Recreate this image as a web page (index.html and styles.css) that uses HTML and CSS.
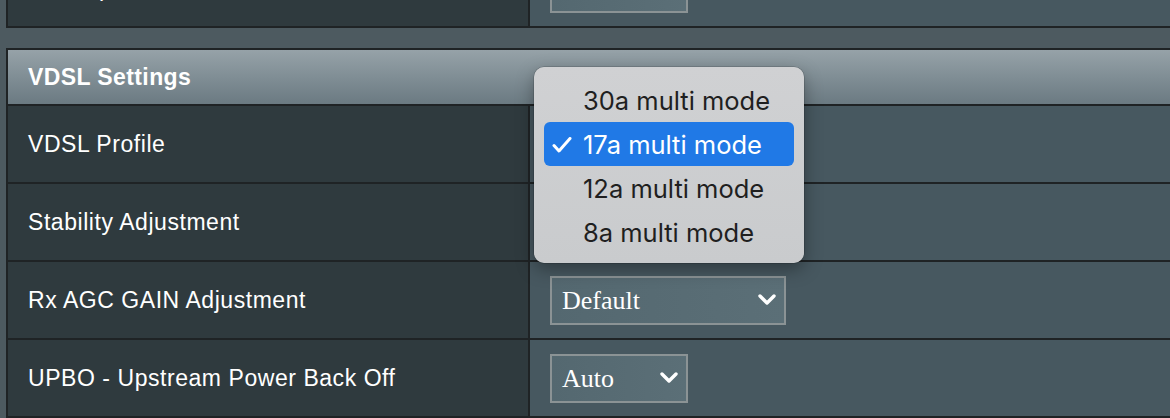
FILE: index.html
```html
<!DOCTYPE html>
<html lang="en">
<head>
<meta charset="utf-8">
<title>VDSL Settings</title>
<link rel="stylesheet" href="styles.css">
</head>
<body>
<div class="page">
  <div class="table table-prev">
    <div class="cell label">Bitswap</div>
    <div class="cell value">
      <div class="select select-sm"><span>Enable</span>
        <svg class="chev" viewBox="0 0 18 12" width="18" height="12"><polyline points="2,2 9,9 16,2"/></svg>
      </div>
    </div>
  </div>

  <div class="table table-main">
    <div class="head">VDSL Settings</div>

    <div class="cell label">VDSL Profile</div>
    <div class="cell value">
      <div class="select select-md"><span>17a multi mode</span>
        <svg class="chev" viewBox="0 0 18 12" width="18" height="12"><polyline points="2,2 9,9 16,2"/></svg>
      </div>
    </div>

    <div class="cell label">Stability Adjustment</div>
    <div class="cell value">
      <div class="select select-md"><span>Disabled</span>
        <svg class="chev" viewBox="0 0 18 12" width="18" height="12"><polyline points="2,2 9,9 16,2"/></svg>
      </div>
    </div>

    <div class="cell label">Rx AGC GAIN Adjustment</div>
    <div class="cell value">
      <div class="select select-md"><span>Default</span>
        <svg class="chev" viewBox="0 0 18 12" width="18" height="12"><polyline points="2,2 9,9 16,2"/></svg>
      </div>
    </div>

    <div class="cell label">UPBO - Upstream Power Back Off</div>
    <div class="cell value">
      <div class="select select-sm"><span>Auto</span>
        <svg class="chev" viewBox="0 0 18 12" width="18" height="12"><polyline points="2,2 9,9 16,2"/></svg>
      </div>
    </div>
  </div>

  <div class="menu">
    <div class="item">30a multi mode</div>
    <div class="item selected">
      <svg class="check" viewBox="0 0 20 16" width="20" height="16"><polyline points="2,8.5 7,14 18,1.5"/></svg>
      17a multi mode
    </div>
    <div class="item">12a multi mode</div>
    <div class="item">8a multi mode</div>
  </div>
</div>
</body>
</html>
```

FILE: styles.css
```css
html, body {
  margin: 0;
  padding: 0;
  background: #4d5a60;
  overflow: hidden;
}

.page {
  position: relative;
  width: 1170px;
  height: 418px;
  padding-left: 6px;
  box-sizing: border-box;
  overflow: hidden;
  font-family: "Liberation Sans", Arial, Helvetica, sans-serif;
}

.table {
  display: grid;
  grid-template-columns: 520px 1fr;
  grid-auto-rows: 76px;
  gap: 2px;
  width: 1240px;
  background: #1f2325;
  border: 2px solid #1f2325;
}

.table-prev {
  margin-top: -52px;
  margin-bottom: 20px;
}

.table-main {
  grid-template-rows: 54px;
}

.head {
  grid-column: 1 / -1;
  display: flex;
  align-items: center;
  padding-left: 20px;
  background: linear-gradient(to bottom, #96a2a8 0%, #808e95 50%, #6b7a82 100%);
  color: #ffffff;
  font-weight: bold;
  font-size: 23px;
  letter-spacing: 0.4px;
}

.cell {
  display: flex;
  align-items: center;
}

.label {
  background: #2f3a3e;
  color: #ffffff;
  font-size: 23px;
  letter-spacing: 0.55px;
  padding-left: 20px;
}

.value {
  background: #475860;
  padding-left: 20px;
}

.select {
  height: 49px;
  box-sizing: border-box;
  border: 2px solid #8b9395;
  background: linear-gradient(to right, #546870, #5b6f77);
  display: flex;
  align-items: center;
  justify-content: space-between;
  padding: 0 8px 0 10px;
  color: #ffffff;
  font-family: "Liberation Serif", "Times New Roman", serif;
  font-size: 26px;
}

.select span {
  line-height: 1;
  padding-top: 2px;
}

.select-md { width: 236px; }
.select-sm { width: 138px; }

.chev {
  fill: none;
  stroke: #ffffff;
  stroke-width: 3.4;
  stroke-linecap: round;
  stroke-linejoin: round;
}

.menu {
  position: absolute;
  left: 534px;
  top: 67px;
  width: 270px;
  height: 196px;
  box-sizing: border-box;
  padding: 11px 10px 9px;
  border-radius: 10px;
  background: linear-gradient(to bottom, #d0d1d3, #c9cbcd);
  box-shadow: 0 0 0 0.5px rgba(0, 0, 0, 0.25), 0 6px 18px rgba(0, 0, 0, 0.35);
  font-family: Inter, "Noto Sans", sans-serif;
  font-size: 25.5px;
  color: #1f1f1f;
}

.item {
  position: relative;
  height: 44px;
  display: flex;
  align-items: center;
  padding-left: 39px;
  border-radius: 6px;
}

.item.selected {
  background: #2079e6;
  color: #ffffff;
}

.check {
  position: absolute;
  left: 8px;
  top: 15px;
  fill: none;
  stroke: #ffffff;
  stroke-width: 3;
  stroke-linecap: round;
  stroke-linejoin: round;
}
```
